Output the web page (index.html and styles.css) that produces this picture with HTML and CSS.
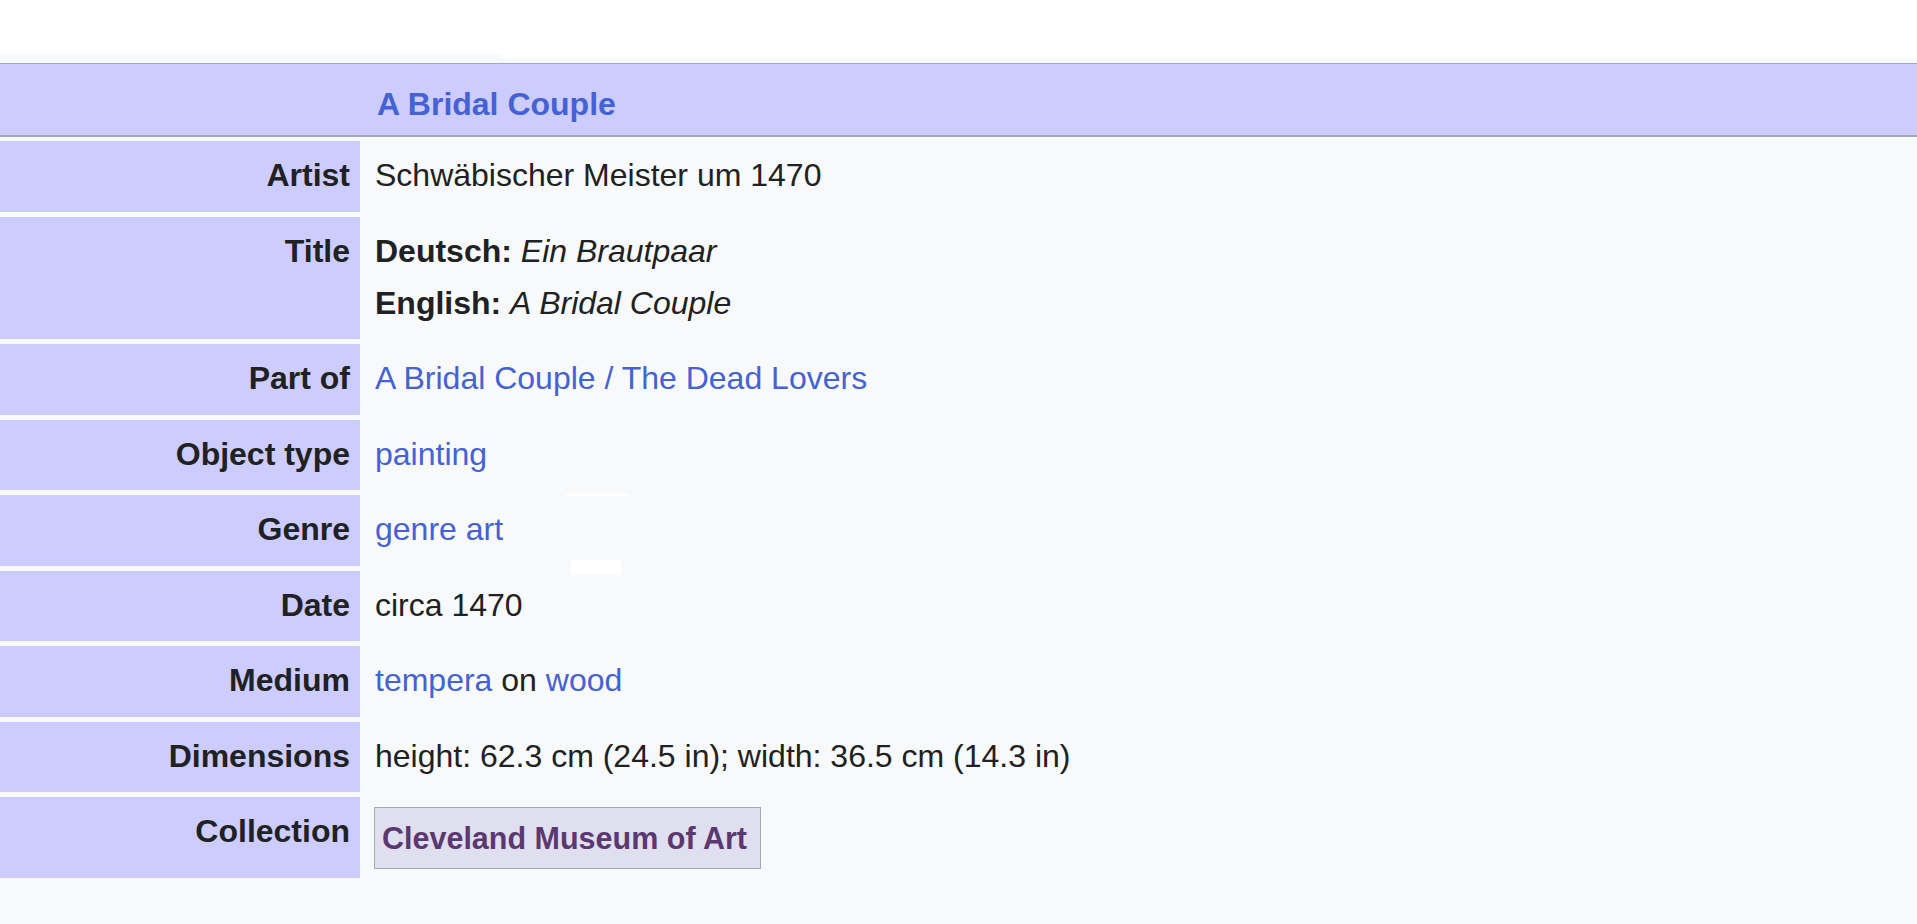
FILE: index.html
```html
<!DOCTYPE html>
<html lang="en">
<head>
  <meta charset="UTF-8" />
  <meta name="viewport" content="width=device-width, initial-scale=1.0"/>
  <title>A Bridal Couple</title>
  <link rel="stylesheet" href="styles.css">
</head>
<body>
  <div class="top-strip">
    <div class="strip-left"></div>
    <div class="strip-right"></div>
  </div>

  <div class="infobox">
    <div class="info-head">
      <span></span>
      <span class="head-title">A Bridal Couple</span>
    </div>

    <div class="info-rows">
      <div class="label">Artist</div>
      <div class="value">Schwäbischer Meister um 1470</div>

      <div class="label">Title</div>
      <div class="value">
        <div><b>Deutsch:</b> <i>Ein Brautpaar</i></div>
        <div><b>English:</b> <i>A Bridal Couple</i></div>
      </div>

      <div class="label">Part of</div>
      <div class="value"><a href="#">A Bridal Couple / The Dead Lovers</a></div>

      <div class="label">Object type</div>
      <div class="value"><a href="#">painting</a></div>

      <div class="label">Genre</div>
      <div class="value"><a href="#">genre art</a></div>

      <div class="label">Date</div>
      <div class="value">circa 1470</div>

      <div class="label">Medium</div>
      <div class="value"><a href="#">tempera</a> on <a href="#">wood</a></div>

      <div class="label">Dimensions</div>
      <div class="value">height: 62.3 cm (24.5 in); width: 36.5 cm (14.3 in)</div>

      <div class="label">Collection</div>
      <div class="value collection-cell">
        <span class="collection-box">Cleveland Museum of Art</span>
      </div>
    </div>
  </div>

  <!-- leftover white bits that sit over the table in the capture -->
  <div class="ghost ghost-line"></div>
  <div class="ghost ghost-box"></div>
</body>
</html>
```

FILE: styles.css
```css
body, html {
  margin: 0;
  padding: 0;
  width: 100%;
  height: 100%;
  overflow: hidden;
}

body {
  position: relative;
  background: #f8f9fa;
  color: #202122;
  font-family: "Liberation Sans", Arial, sans-serif;
  font-size: 32px;
}

a {
  color: #4462d4;
  text-decoration: none;
}

.top-strip {
  display: flex;
  align-items: flex-start;
  height: 63px;
}

.strip-left {
  width: 502px;
  height: 54px;
  background: #fff;
}

.strip-right {
  flex: 1;
  height: 58px;
  background: #fff;
}

/* Header band */
.info-head {
  display: grid;
  grid-template-columns: 360px 1fr;
  background: #ccf;
  border-top: 1px solid #a2a9b1;
  border-bottom: 2px solid #a2a9b1;
  padding: 14px 0 5px;
  line-height: 52px;
}

.head-title {
  padding-left: 17px;
  font-weight: bold;
  color: #4462d4;
}

/* Rows */
.info-rows {
  display: grid;
  grid-template-columns: 360px 1fr;
  row-gap: 5px;
  margin-top: 4px;
  line-height: 52px;
}

.label {
  background: #ccf;
  font-weight: bold;
  text-align: right;
  padding: 8px 10px 10.5px 0;
}

.value {
  padding: 8px 0 10.5px 15px;
}

.collection-cell {
  padding-top: 10px;
  padding-bottom: 9px;
}

.collection-box {
  display: inline-block;
  background: #dfdff0;
  border: 1px solid #a2a9b1;
  color: #5b3870;
  font-weight: bold;
  font-size: 30.5px;
  line-height: 48px;
  padding: 6px 13px 6px 7px;
  margin-left: -1px;
}

/* Overlays */
.ghost {
  position: absolute;
  background: #fff;
}

.ghost-line {
  left: 566px;
  top: 494px;
  width: 63px;
  height: 2px;
}

.ghost-box {
  left: 571px;
  top: 560px;
  width: 50px;
  height: 15px;
}
```
